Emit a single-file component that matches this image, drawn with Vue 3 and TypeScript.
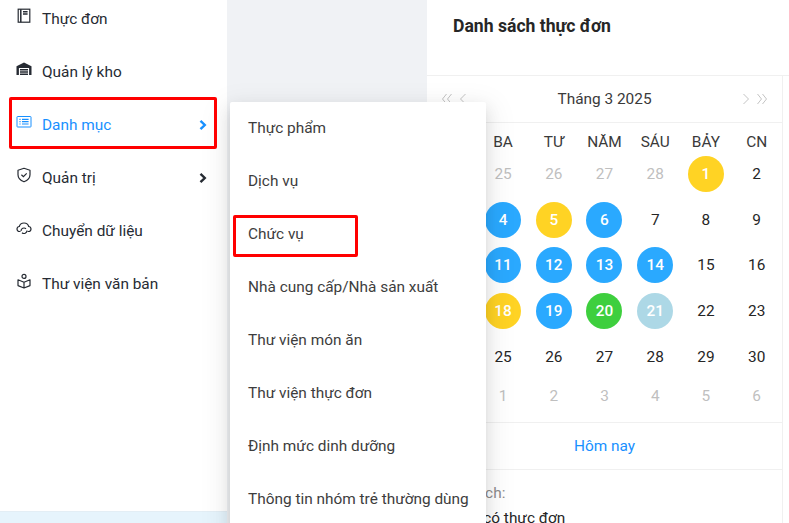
<script setup lang="ts">
type Cell = { n: number; muted?: boolean; mark?: string };

const sideItems = [
  { label: "Thực đơn", icon: "book" },
  { label: "Quản lý kho", icon: "store" },
  { label: "Danh mục", icon: "list", active: true, arrow: true },
  { label: "Quản trị", icon: "shield", arrow: true },
  { label: "Chuyển dữ liệu", icon: "cloud" },
  { label: "Thư viện văn bản", icon: "reader" },
];

const subItems = [
  "Thực phẩm",
  "Dịch vụ",
  "Chức vụ",
  "Nhà cung cấp/Nhà sản xuất",
  "Thư viện món ăn",
  "Thư viện thực đơn",
  "Định mức dinh dưỡng",
  "Thông tin nhóm trẻ thường dùng",
];

const weekDays = ["HAI", "BA", "TƯ", "NĂM", "SÁU", "BẢY", "CN"];

const marks: Record<number, string> = {
  1: "yellow", 4: "blue", 5: "yellow", 6: "blue",
  11: "blue", 12: "blue", 13: "blue", 14: "blue",
  18: "yellow", 19: "blue", 20: "green", 21: "pale",
};

const cells: Cell[] = [
  ...[24, 25, 26, 27, 28].map((n) => ({ n, muted: true })),
  ...Array.from({ length: 30 }, (_, i) => ({ n: i + 1, mark: marks[i + 1] })),
];
const lastRow = [31, 1, 2, 3, 4, 5, 6];
</script>

<template>
  <div class="page">
    <aside class="sidebar">
      <ul class="side-list">
        <li v-for="item in sideItems" :key="item.label" class="side-item" :class="{ active: item.active }">
          <svg class="side-icon" viewBox="0 0 16 16" aria-hidden="true">
            <g v-if="item.icon === 'book'" fill="none" stroke="currentColor" stroke-width="1.2">
              <rect x="2.2" y="1.2" width="11.6" height="13" />
              <path d="M4.800 1.200v13" stroke-width="1.500" />
              <path d="M7 3.800h4.600M7 6h4.600" stroke-width="1.400" />
            </g>
            <g v-else-if="item.icon === 'store'" fill="currentColor">
              <path d="M0.500 5.200 8 1.600l7.500 3.600V14h-2.400V7H2.900v7H0.500z" />
              <path d="M4 8h8v1.500H4zM4 10.200h8v1.500H4zM4 12.400h8V14H4z" />
            </g>
            <g v-else-if="item.icon === 'list'" fill="none" stroke="currentColor" stroke-width="1">
              <rect x="1" y="2.500" width="14" height="10.500" rx="0.600" />
              <path d="M3.400 5.400h1.200M3.400 7.700h1.200M3.400 10h1.200M6 5.400h6.600M6 7.700h6.600M6 10h6.600" stroke-width="1.200" />
            </g>
            <g v-else-if="item.icon === 'shield'" fill="none" stroke="currentColor" stroke-width="1.200">
              <path d="M8 1.300 14 3.200v4.600c0 3.500-2.600 5.800-6 7-3.400-1.200-6-3.500-6-7V3.200z" stroke-linejoin="round" />
              <path d="M5.400 7.800 7.400 9.700l3.300-3.400" />
            </g>
            <g v-else-if="item.icon === 'cloud'" fill="none" stroke="currentColor" stroke-width="1.200">
              <path d="M4.500 11.500H3.500C2 11.500 1 10.300 1 9c0-1.300 1-2.300 2.300-2.500C3.800 4.500 5.800 3 8 3s4.200 1.500 4.700 3.500C14 6.700 15 7.700 15 9c0 1.300-1 2.500-2.500 2.500h-1" />
              <path d="M5 11a3 3 0 0 1 5-2.200M11 10.500a3 3 0 0 1-5 2.200" />
            </g>
            <g v-else fill="none" stroke="currentColor" stroke-width="1.200">
              <circle cx="8" cy="3.400" r="2" />
              <path d="M2 6.800 8 9.200l6-2.400v5.800L8 15l-6-2.400zM8 9.200V15" stroke-linejoin="round" />
            </g>
          </svg>
          <span class="side-label">{{ item.label }}</span>
          <svg v-if="item.arrow" class="side-arrow" viewBox="0 0 10 12" aria-hidden="true">
            <path d="M2.500 1.800 6.800 6l-4.300 4.200" fill="none" stroke="currentColor" stroke-width="2.400" />
          </svg>
        </li>
      </ul>
      <div class="side-foot"></div>
    </aside>

    <div class="gap"></div>

    <main class="panel">
      <h1 class="panel-title">Danh sách thực đơn</h1>
      <section class="calendar">
        <div class="cal-nav">
          <div class="cal-arrows">
            <svg viewBox="0 0 12 12" aria-hidden="true"><path d="M5.500 1 1.500 6l4 5M10.500 1l-4 5 4 5" /></svg>
            <svg class="single" viewBox="0 0 8 12" aria-hidden="true"><path d="M6.500 1 1.500 6l5 5" /></svg>
          </div>
          <span class="cal-month">Tháng 3 2025</span>
          <div class="cal-arrows right">
            <svg class="single" viewBox="0 0 8 12" aria-hidden="true"><path d="M1.500 1l5 5-5 5" /></svg>
            <svg viewBox="0 0 12 12" aria-hidden="true"><path d="M1.500 1l4 5-4 5M6.500 1l4 5-4 5" /></svg>
          </div>
        </div>
        <div class="cal-weekdays">
          <div v-for="d in weekDays" :key="d" class="cal-head">{{ d }}</div>
        </div>
        <div class="cal-grid">
          <div v-for="(c, i) in cells" :key="i" class="cal-cell">
            <span class="cal-day" :class="[c.mark, { muted: c.muted }]">{{ c.n }}</span>
          </div>
        </div>
        <div class="cal-last">
          <span v-for="n in lastRow" :key="n" class="cal-last-day">{{ n }}</span>
        </div>
        <div class="cal-today">Hôm nay</div>
        <div class="legend">
          <div class="legend-title">Chú thích:</div>
          <div class="legend-row">Chưa có thực đơn</div>
        </div>
      </section>
    </main>

    <!-- submenu mo ra tu Danh muc -->
    <ul class="submenu">
      <li v-for="s in subItems" :key="s" class="sub-item">{{ s }}</li>
    </ul>

    <div class="mark mark-side"></div>
    <div class="mark mark-sub"></div>
  </div>
</template>

<style scoped>
.page {
  position: relative;
  display: flex;
  width: 789px;
  height: 523px;
  overflow: hidden;
  background: #f0f2f5;
  font-family: Roboto, "Liberation Sans", sans-serif;
  font-size: 15.4px;
  color: rgba(0, 0, 0, 0.85);
}

ul {
  list-style: none;
  margin: 0;
  padding: 0;
}

.sidebar {
  position: relative;
  flex: 0 0 227px;
  background: #fff;
}

.side-list {
  margin-top: -7.5px;
}

.side-item {
  display: flex;
  align-items: center;
  height: 53px;
  padding: 0 19px 0 16px;
  color: #262b33;
}

.side-item.active {
  color: #1890ff;
}

.side-icon {
  flex: none;
  width: 16px;
  height: 16px;
  margin: -6px 10px 0 0;
}

.side-label {
  flex: 1;
}

.side-arrow {
  flex: none;
  width: 10px;
  height: 12px;
}

.side-foot {
  position: absolute;
  left: 0;
  right: 0;
  bottom: 0;
  height: 11px;
  background: #e6f4fc;
  border-top: 1px solid #e3eef5;
}

.gap {
  flex: 0 0 200px;
}

.panel {
  flex: 1;
  min-width: 0;
  background: #fff;
}

.panel-title {
  height: 76px;
  margin: 0;
  padding: 14px 0 0 26px;
  box-sizing: border-box;
  border-bottom: 1px solid #f0f0f0;
  font-size: 17.6px;
  font-weight: 700;
  line-height: 24px;
  color: #262626;
}

.calendar {
  width: 355px;
  border-right: 1px solid #f0f0f0;
}

.cal-nav {
  display: grid;
  grid-template-columns: 1fr auto 1fr;
  align-items: center;
  height: 46px;
  padding: 0 14px;
  border-bottom: 1px solid #f0f0f0;
  color: #3a3a3a;
}

.cal-arrows {
  display: flex;
  align-items: center;
  gap: 6px;
}

.cal-arrows.right {
  justify-content: flex-end;
}

.cal-arrows svg {
  width: 12px;
  height: 12px;
  fill: none;
  stroke: #c4c4c4;
  stroke-width: 1;
}

.cal-arrows svg.single {
  width: 8px;
}

.cal-weekdays,
.cal-grid,
.cal-last {
  display: grid;
  grid-template-columns: repeat(7, 1fr);
}

.cal-head {
  display: flex;
  align-items: flex-end;
  justify-content: center;
  height: 28px;
  padding-bottom: 1px;
  box-sizing: border-box;
  line-height: 16px;
  color: #3a3a3a;
}

.cal-grid {
  grid-auto-rows: 45.7px;
}

.cal-cell {
  display: flex;
  align-items: center;
  justify-content: center;
}

.cal-day {
  display: flex;
  align-items: center;
  justify-content: center;
  width: 36px;
  height: 36px;
  border-radius: 50%;
  color: #262626;
}

.cal-day.muted,
.cal-last-day {
  color: #bfbfbf;
}

.cal-day.yellow,
.cal-day.blue,
.cal-day.green,
.cal-day.pale {
  color: #fff;
  font-weight: 500;
}

.cal-day.yellow { background: #ffd324; }
.cal-day.blue { background: #2aa9ff; }
.cal-day.green { background: #3ecf3e; }
.cal-day.pale { background: #add8e6; }

.cal-last {
  height: 43px;
  line-height: 34px;
  text-align: center;
}

.cal-today {
  height: 46px;
  line-height: 46px;
  text-align: center;
  color: #1890ff;
  border-top: 1px solid #f0f0f0;
  border-bottom: 1px solid #f0f0f0;
}

.legend {
  padding: 11px 0 0 10px;
  line-height: 25px;
}

.legend-title {
  color: #8c8c8c;
}

.legend-row {
  padding-left: 6px;
  color: #262626;
}

.submenu {
  position: absolute;
  left: 230px;
  top: 102px;
  width: 256px;
  height: 430px;
  background: #fff;
  border-radius: 2px;
  box-shadow: 0 3px 6px -4px rgba(0, 0, 0, 0.14), 0 6px 16px rgba(0, 0, 0, 0.1), 0 9px 28px 8px rgba(0, 0, 0, 0.06);
}

.sub-item {
  display: flex;
  align-items: center;
  height: 53px;
  padding-left: 18px;
  color: #3d3d3d;
  white-space: nowrap;
}

.sub-item:first-child {
  margin-top: -0.5px;
}

.mark {
  position: absolute;
  box-sizing: border-box;
  border: 3px solid #f00;
  border-radius: 2px;
}

.mark-side {
  left: 9px;
  top: 97px;
  width: 208px;
  height: 52px;
}

.mark-sub {
  left: 233px;
  top: 215px;
  width: 125px;
  height: 42px;
}
</style>

<style>
html,
body {
  margin: 0;
  overflow: hidden;
}
</style>
